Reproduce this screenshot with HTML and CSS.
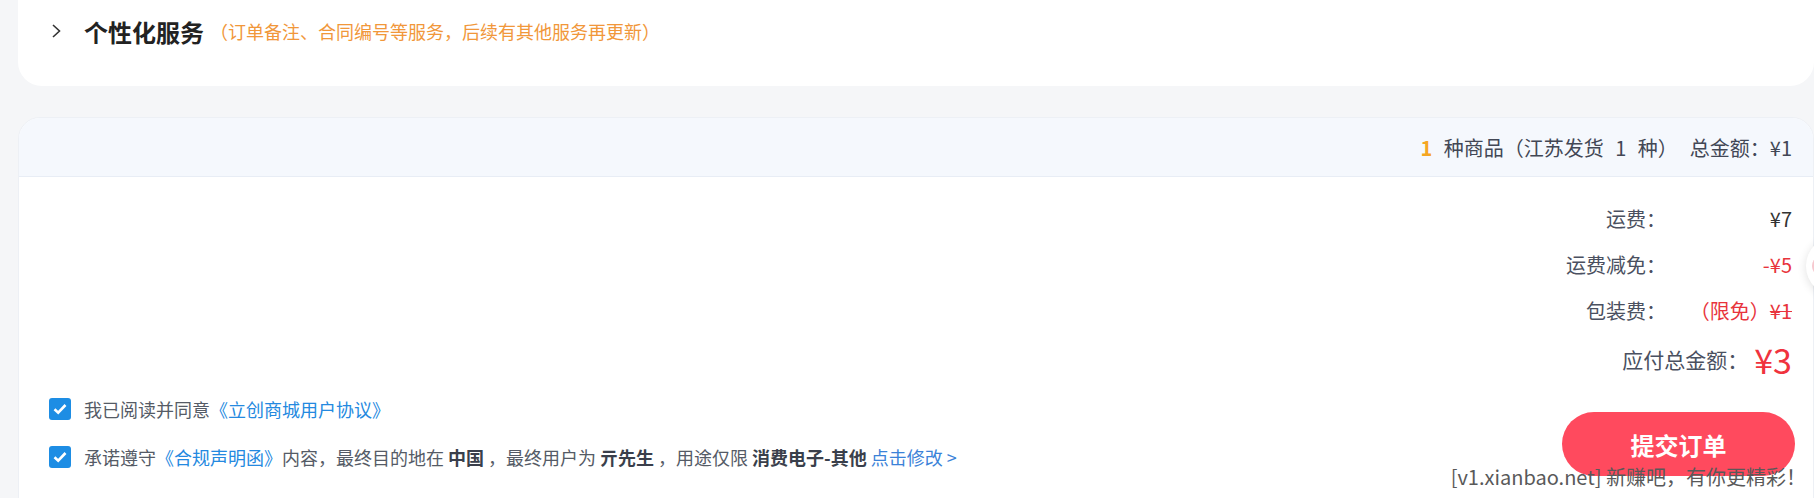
FILE: index.html
```html
<!DOCTYPE html>
<html lang="zh-CN">
<head>
    <meta charset="UTF-8">
    <meta name="viewport" content="width=device-width, initial-scale=1.0">
    <title>确认订单</title>
    <link rel="stylesheet" href="styles.css">
</head>
<body>
    <div class="page">
        <section class="card service">
            <div class="service-head">
                <svg class="chevron" width="11" height="16" viewBox="0 0 11 16">
                    <path d="M2 2 L8.5 8 L2 14" fill="none" stroke="#333" stroke-width="1.6"/>
                </svg>
                <h2>个性化服务</h2>
                <span class="hint">（订单备注、合同编号等服务，后续有其他服务再更新）</span>
            </div>
        </section>

        <section class="card summary">
            <div class="summary-head">
                <span class="goods"><b class="count">1</b> 种商品（江苏发货 1 种）</span>
                <span class="sum">总金额：¥1</span>
            </div>

            <div class="fees">
                <div class="fee-row">
                    <span class="fee-label">运费：</span>
                    <span class="fee-value">¥7</span>
                </div>
                <div class="fee-row">
                    <span class="fee-label">运费减免：</span>
                    <span class="fee-value red">-¥5</span>
                </div>
                <div class="fee-row">
                    <span class="fee-label">包装费：</span>
                    <span class="fee-value red">（限免）<s>¥1</s></span>
                </div>
                <div class="fee-row total">
                    <span class="fee-label">应付总金额：</span>
                    <span class="fee-value red">¥3</span>
                </div>
            </div>

            <div class="submit-row">
                <div class="agreements">
                    <label class="agree">
                        <span class="check"><svg width="14" height="12" viewBox="0 0 14 12"><path d="M1.5 6.2 L5.2 9.6 L12.5 2" fill="none" stroke="#fff" stroke-width="2.6"/></svg></span>
                        我已阅读并同意<a href="#">《立创商城用户协议》</a>
                    </label>
                    <label class="agree">
                        <span class="check"><svg width="14" height="12" viewBox="0 0 14 12"><path d="M1.5 6.2 L5.2 9.6 L12.5 2" fill="none" stroke="#fff" stroke-width="2.6"/></svg></span>
                        承诺遵守<a href="#">《合规声明函》</a>内容，最终目的地在<b>中国</b>，最终用户为<b>亓先生</b>，用途仅限<b>消费电子-其他</b><a href="#" class="edit">点击修改 &gt;</a>
                    </label>
                </div>
                <button type="button" class="submit">提交订单</button>
            </div>
        </section>
    </div>

    <div class="side-float"><span></span></div>
    <div class="watermark">[v1.xianbao.net] 新赚吧，有你更精彩！</div>
</body>
</html>
```

FILE: styles.css
```css
/* General Styles */
body {
    margin: 0;
    height: 498px;
    overflow: hidden;
    background-color: #f5f6f8;
    font-family: "Noto Sans CJK SC", "Noto Sans", sans-serif;
    color: #333;
}
.page {
    padding-left: 18px;
}
.card {
    background: #fff;
    border-radius: 24px;
}

/* Service card */
.service {
    height: 86px;
    box-sizing: border-box;
    border-radius: 0 0 24px 24px;
    padding: 14px 0 0 33px;
}
.service-head {
    display: flex;
    align-items: center;
    height: 34px;
}
.chevron {
    margin-right: 22px;
}
.service-head h2 {
    margin: 0;
    font-size: 24px;
    font-weight: bold;
    color: #222;
}
.hint {
    margin-left: 6px;
    font-size: 18px;
    color: #f1973a;
}

/* Summary card */
.summary {
    margin-top: 31px;
    height: 420px;
    border: 1px solid #edf0f5;
    border-radius: 22px;
    overflow: hidden;
}
.summary-head {
    display: flex;
    justify-content: flex-end;
    align-items: center;
    gap: 12px;
    height: 58px;
    padding-right: 21px;
    background-color: #f5f8fd;
    border-bottom: 1px solid #e8edf5;
    font-size: 20px;
    color: #424755;
}
.goods {
    word-spacing: 7px;
}
.count {
    color: #f5a623;
}
.fees {
    padding: 18px 21px 0 0;
}
.fee-row {
    display: flex;
    justify-content: flex-end;
    align-items: center;
    height: 46px;
    font-size: 20px;
    color: #4a5060;
}
.fee-value {
    width: 126px;
    text-align: right;
    color: #333;
}
.fee-value.red {
    color: #e8343c;
}
.fee-value s {
    text-decoration-thickness: 1px;
}
.fee-row.total {
    height: 52px;
}
.fee-row.total .fee-label {
    font-size: 21px;
}
.fee-row.total .fee-value {
    width: auto;
    margin-left: 6px;
    font-size: 34px;
    color: #f0333d;
}

/* Agreements and submit */
.submit-row {
    display: flex;
    justify-content: space-between;
    align-items: flex-start;
    padding: 0 18px 0 30px;
}
.agree {
    display: flex;
    align-items: center;
    height: 48px;
    font-size: 18px;
    color: #555b66;
}
.check {
    display: flex;
    align-items: center;
    justify-content: center;
    width: 22px;
    height: 22px;
    margin-right: 13px;
    border-radius: 3px;
    background-color: #1d8de4;
}
.agree a {
    color: #2489e0;
    text-decoration: none;
}
.agree b {
    margin: 0 4px;
    color: #3a3f4b;
}
.agree .edit {
    color: #3b82d8;
}
.submit {
    margin-top: 27px;
    width: 233px;
    height: 64px;
    border: none;
    border-radius: 32px;
    background-color: #ff4a5e;
    color: #fff;
    font-family: inherit;
    font-size: 24px;
    font-weight: bold;
    cursor: pointer;
}

/* Overlays */
.side-float {
    position: absolute;
    left: 1806px;
    top: 236px;
    width: 60px;
    height: 60px;
    border-radius: 50%;
    background: #fff;
    box-shadow: 0 2px 10px rgba(0, 0, 0, 0.12);
}
.side-float span {
    position: absolute;
    left: 6px;
    top: 22px;
    width: 12px;
    height: 16px;
    border-radius: 50%;
    background: #f6c8cf;
}
.watermark {
    position: absolute;
    right: 8px;
    bottom: 7px;
    font-size: 20px;
    line-height: 28px;
    color: #595959;
}
```
